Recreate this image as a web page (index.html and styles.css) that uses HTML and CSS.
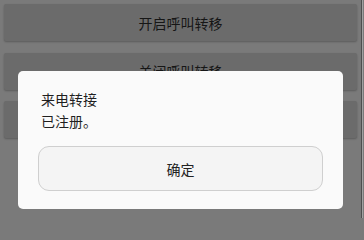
FILE: index.html
```html
<!DOCTYPE html>
<html lang="zh-CN">
<head>
<meta charset="utf-8">
<link rel="stylesheet" href="styles.css">
</head>
<body>
<div class="screen">
  <div class="main">
    <div class="btn">开启呼叫转移</div>
    <div class="btn">关闭呼叫转移</div>
    <div class="btn">查询呼叫转移</div>
  </div>
  <div class="edge">
    <span class="edge-dark"></span>
    <span class="edge-light"></span>
  </div>
  <div class="dialog">
    <div class="dialog-text">
      <div class="dialog-title">来电转接</div>
      <div class="dialog-msg">已注册。</div>
    </div>
    <div class="dialog-ok">确定</div>
  </div>
</div>
</body>
</html>
```
FILE: styles.css
```css
html, body {
  margin: 0;
  padding: 0;
}
body {
  width: 364px;
  height: 218px;
  overflow: hidden;
  background: #7a7a7a;
  font-family: "Noto Sans CJK SC", "Noto Sans", sans-serif;
}
.screen {
  position: relative;
  display: flex;
  width: 364px;
  height: 218px;
}
.main {
  flex: 1;
  display: flex;
  flex-direction: column;
  gap: 11.5px;
  padding: 4px 4px 0 4px;
}
.btn {
  height: 37px;
  background: #6b6b6b;
  border-radius: 2px;
  box-shadow: 0 1px 2px rgba(0, 0, 0, 0.25);
  display: flex;
  align-items: center;
  justify-content: center;
  font-size: 14px;
  color: #161616;
}
.edge {
  display: flex;
  width: 3px;
}
.edge-dark {
  width: 1px;
  background: #4e4e4e;
}
.edge-light {
  width: 1px;
  background: #a2a2a2;
}
.dialog {
  position: absolute;
  left: 18px;
  top: 71px;
  width: 325px;
  height: 138px;
  box-sizing: border-box;
  padding: 17px 20px 18px 20px;
  background: #fafafa;
  border-radius: 5px;
}
.dialog-text {
  padding-left: 3px;
  font-size: 14px;
  line-height: 22px;
  color: #1f1f1f;
}
.dialog-ok {
  margin-top: 14px;
  height: 45px;
  box-sizing: border-box;
  border: 1px solid #cfcfcf;
  border-radius: 11px;
  background: #f4f4f4;
  display: flex;
  align-items: center;
  justify-content: center;
  font-size: 14px;
  color: #222;
}
```
